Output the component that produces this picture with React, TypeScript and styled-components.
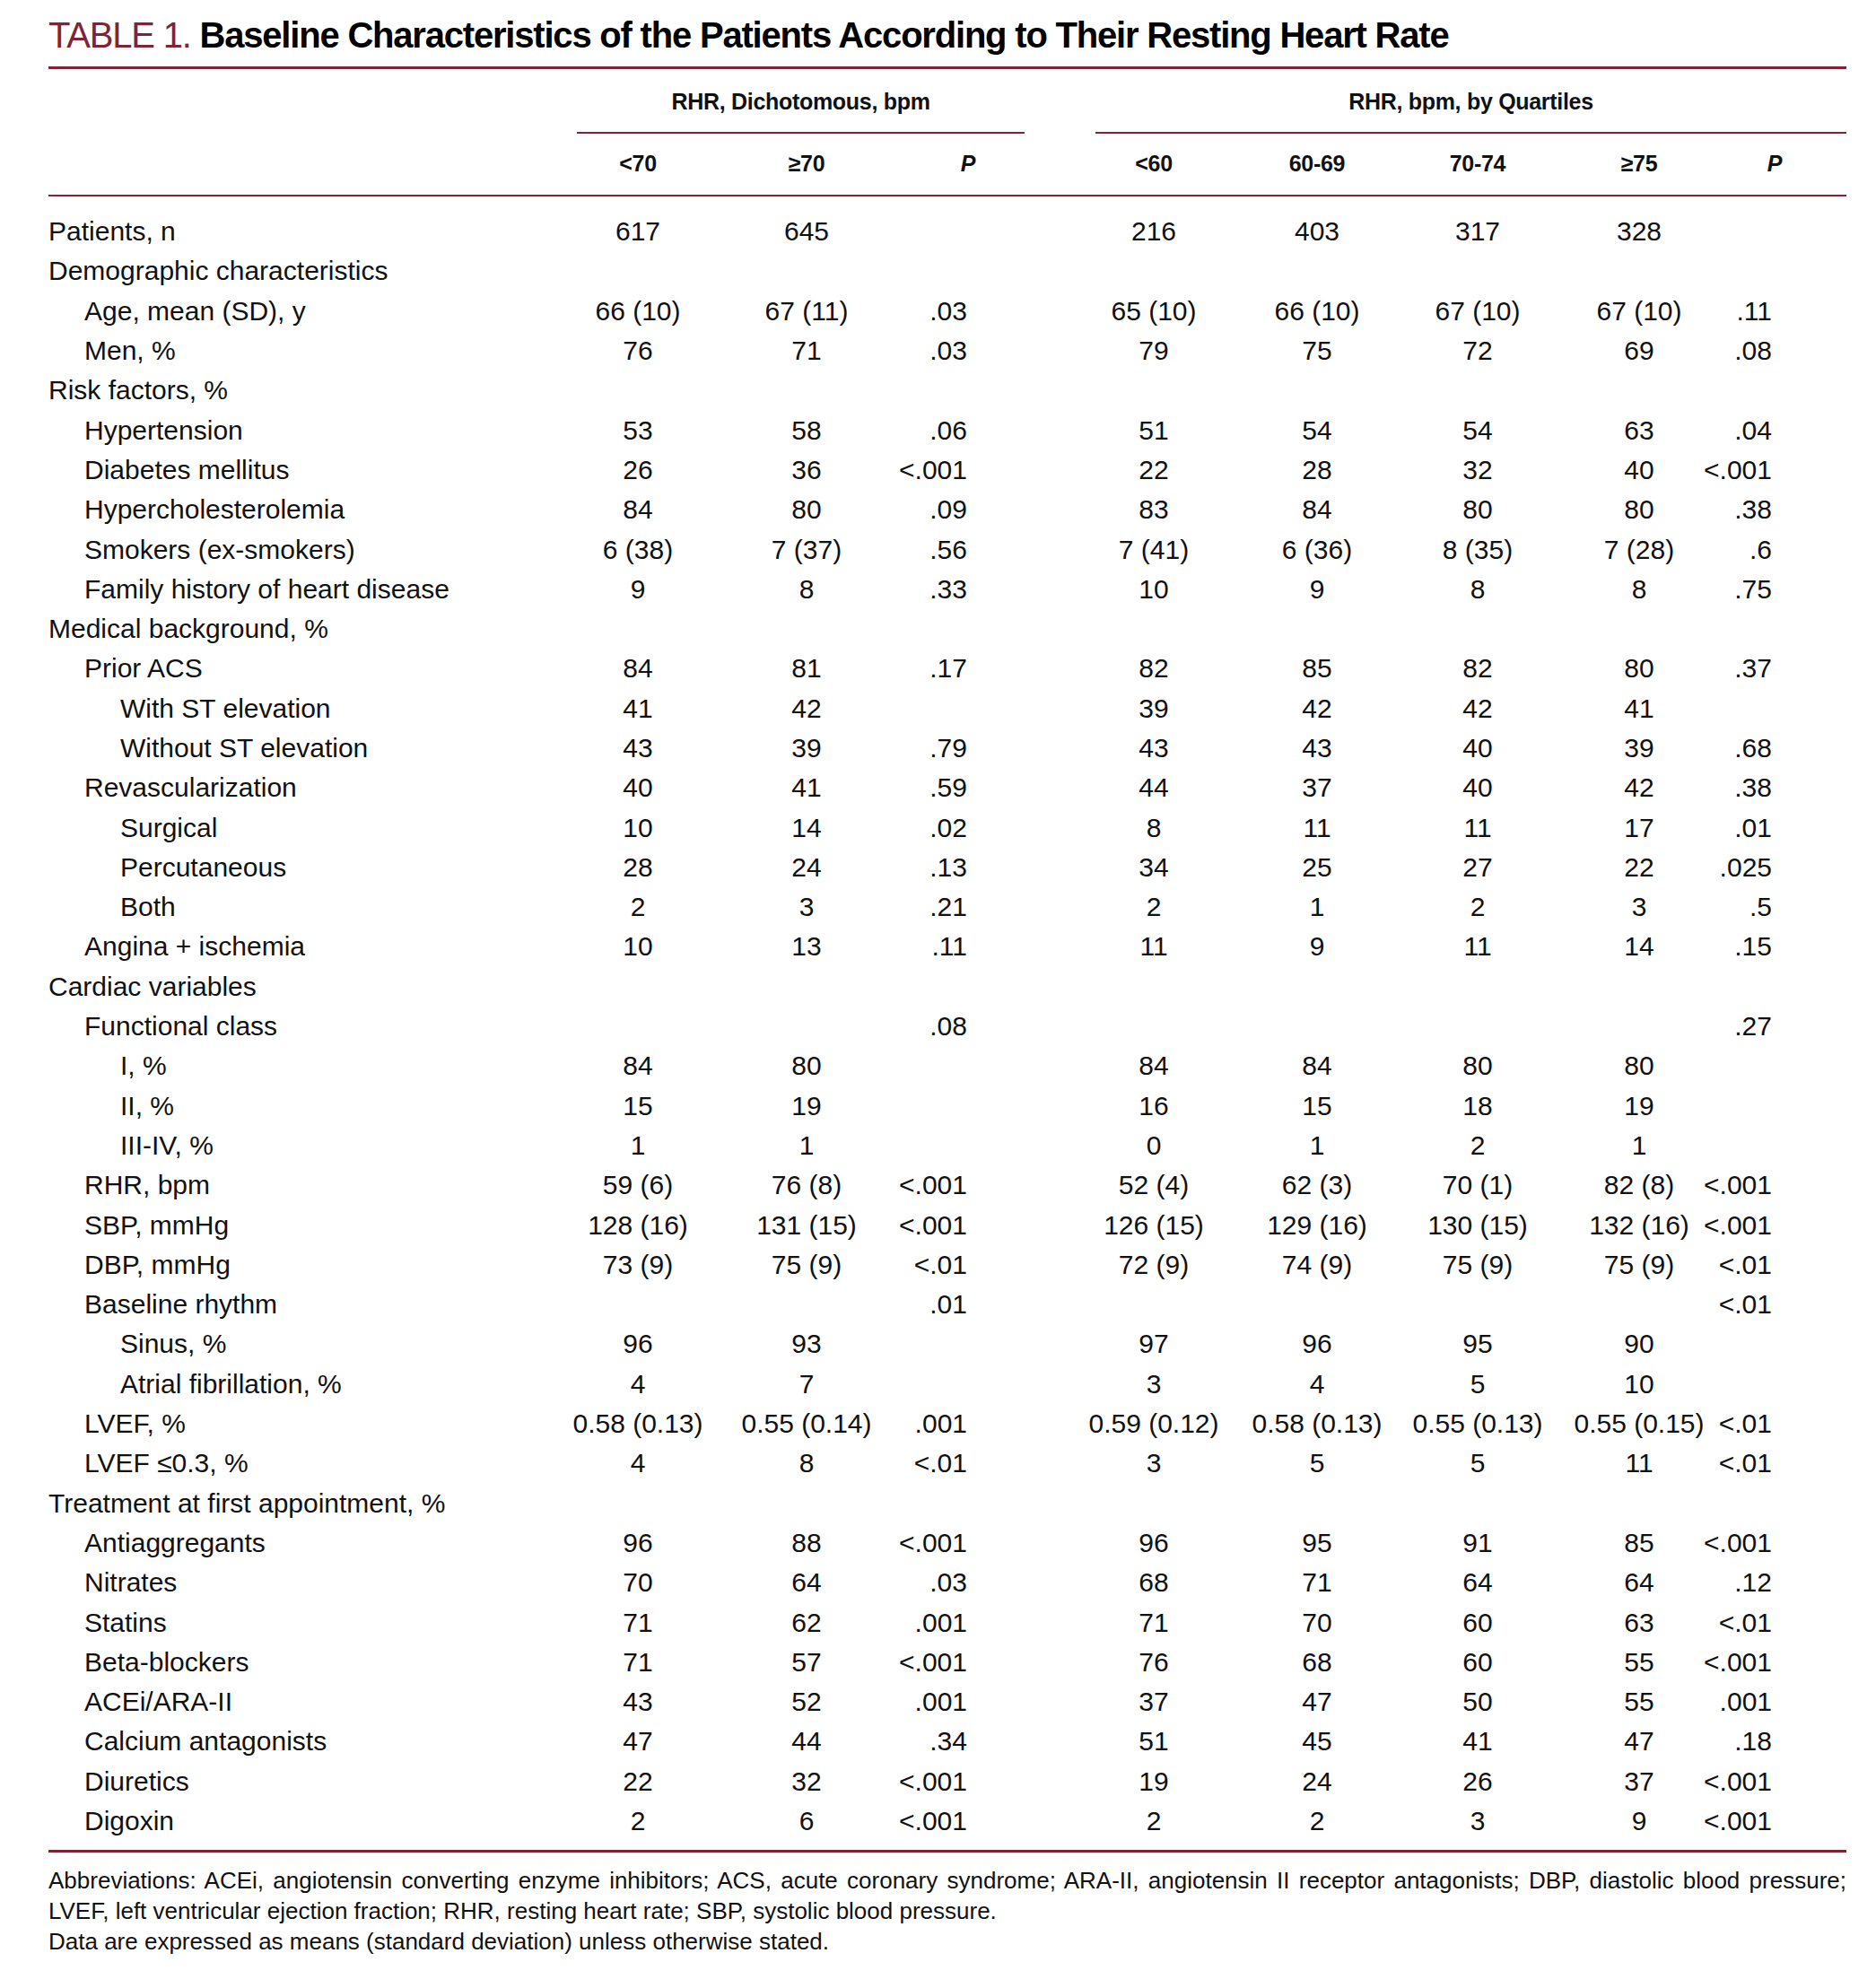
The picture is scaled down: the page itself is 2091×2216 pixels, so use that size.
import React from "react";
import styled, { createGlobalStyle } from "styled-components";

const GlobalStyle = createGlobalStyle`
  html, body {
    margin: 0;
    padding: 0;
    background: #ffffff;
  }
  body {
    font-family: "Liberation Sans", Arial, sans-serif;
    color: #111111;
  }
`;

const MAROON = "#7d2536";
const COLS = "563px 188px 188px 173px 240px 124px 234px 126px 168px";

const Page = styled.div`
  width: 2004px;
  margin-left: 54px;
  padding-top: 14px;
  padding-bottom: 40px;
`;

const Title = styled.h1`
  margin: 0;
  font-family: "Liberation Sans Narrow", "Liberation Sans", Arial, sans-serif;
  font-size: 40px;
  line-height: 50px;
  font-weight: 700;
  letter-spacing: -1.2px;
  color: #000;
  white-space: nowrap;
`;

const TitleTag = styled.span`
  font-weight: 400;
  color: ${MAROON};
`;

const Rule = styled.div`
  height: 2.5px;
  background: ${MAROON};
`;

const TopRule = styled(Rule)`
  margin-top: 10px;
`;

const HeadGrid = styled.div`
  display: grid;
  grid-template-columns: ${COLS};
`;

const GroupLabel = styled.div<{ $start: number; $end: number; $ml: number; $mr: number }>`
  grid-column: ${(p) => p.$start} / ${(p) => p.$end};
  margin: 0 ${(p) => p.$mr}px 0 ${(p) => p.$ml}px;
  padding-top: 21px;
  padding-bottom: 19px;
  border-bottom: 2.5px solid ${MAROON};
  text-align: center;
  font-size: 25px;
  line-height: 30px;
  font-weight: 700;
  letter-spacing: -0.3px;
  white-space: nowrap;
`;

const ColHead = styled.div<{ $align: "center" | "flex-end"; $pr?: number }>`
  display: flex;
  align-items: center;
  justify-content: ${(p) => p.$align};
  padding-right: ${(p) => p.$pr ?? 0}px;
  height: 68px;
  font-size: 25px;
  font-weight: 700;
  letter-spacing: -0.3px;
  white-space: nowrap;
`;

const Italic = styled.span`
  font-style: italic;
`;

const Body = styled.div`
  padding: 17px 0 10px;
`;

const Row = styled.div`
  display: grid;
  grid-template-columns: ${COLS};
  height: 44.3px;
  align-items: center;
  font-size: 30px;
  line-height: 36px;
`;

const Label = styled.div<{ $level: number }>`
  padding-left: ${(p) => p.$level * 40}px;
  white-space: nowrap;
`;

const Cell = styled.div<{ $align: "center" | "flex-end"; $pr?: number }>`
  display: flex;
  justify-content: ${(p) => p.$align};
  padding-right: ${(p) => p.$pr ?? 0}px;
  white-space: nowrap;
`;

const Notes = styled.div`
  margin-top: 14px;
  font-size: 26px;
  line-height: 34px;
`;

const NoteLine = styled.div<{ $justify?: boolean }>`
  text-align: ${(p) => (p.$justify ? "justify" : "left")};
  text-align-last: ${(p) => (p.$justify ? "justify" : "left")};
  white-space: ${(p) => (p.$justify ? "normal" : "nowrap")};
`;

type RowData = [number, string, ...string[]];

const rows: RowData[] = [
  [0, "Patients, n", "617", "645", "", "216", "403", "317", "328", ""],
  [0, "Demographic characteristics"],
  [1, "Age, mean (SD), y", "66 (10)", "67 (11)", ".03", "65 (10)", "66 (10)", "67 (10)", "67 (10)", ".11"],
  [1, "Men, %", "76", "71", ".03", "79", "75", "72", "69", ".08"],
  [0, "Risk factors, %"],
  [1, "Hypertension", "53", "58", ".06", "51", "54", "54", "63", ".04"],
  [1, "Diabetes mellitus", "26", "36", "<.001", "22", "28", "32", "40", "<.001"],
  [1, "Hypercholesterolemia", "84", "80", ".09", "83", "84", "80", "80", ".38"],
  [1, "Smokers (ex-smokers)", "6 (38)", "7 (37)", ".56", "7 (41)", "6 (36)", "8 (35)", "7 (28)", ".6"],
  [1, "Family history of heart disease", "9", "8", ".33", "10", "9", "8", "8", ".75"],
  [0, "Medical background, %"],
  [1, "Prior ACS", "84", "81", ".17", "82", "85", "82", "80", ".37"],
  [2, "With ST elevation", "41", "42", "", "39", "42", "42", "41", ""],
  [2, "Without ST elevation", "43", "39", ".79", "43", "43", "40", "39", ".68"],
  [1, "Revascularization", "40", "41", ".59", "44", "37", "40", "42", ".38"],
  [2, "Surgical", "10", "14", ".02", "8", "11", "11", "17", ".01"],
  [2, "Percutaneous", "28", "24", ".13", "34", "25", "27", "22", ".025"],
  [2, "Both", "2", "3", ".21", "2", "1", "2", "3", ".5"],
  [1, "Angina + ischemia", "10", "13", ".11", "11", "9", "11", "14", ".15"],
  [0, "Cardiac variables"],
  [1, "Functional class", "", "", ".08", "", "", "", "", ".27"],
  [2, "I, %", "84", "80", "", "84", "84", "80", "80", ""],
  [2, "II, %", "15", "19", "", "16", "15", "18", "19", ""],
  [2, "III-IV, %", "1", "1", "", "0", "1", "2", "1", ""],
  [1, "RHR, bpm", "59 (6)", "76 (8)", "<.001", "52 (4)", "62 (3)", "70 (1)", "82 (8)", "<.001"],
  [1, "SBP, mmHg", "128 (16)", "131 (15)", "<.001", "126 (15)", "129 (16)", "130 (15)", "132 (16)", "<.001"],
  [1, "DBP, mmHg", "73 (9)", "75 (9)", "<.01", "72 (9)", "74 (9)", "75 (9)", "75 (9)", "<.01"],
  [1, "Baseline rhythm", "", "", ".01", "", "", "", "", "<.01"],
  [2, "Sinus, %", "96", "93", "", "97", "96", "95", "90", ""],
  [2, "Atrial fibrillation, %", "4", "7", "", "3", "4", "5", "10", ""],
  [1, "LVEF, %", "0.58 (0.13)", "0.55 (0.14)", ".001", "0.59 (0.12)", "0.58 (0.13)", "0.55 (0.13)", "0.55 (0.15)", "<.01"],
  [1, "LVEF \u22640.3, %", "4", "8", "<.01", "3", "5", "5", "11", "<.01"],
  [0, "Treatment at first appointment, %"],
  [1, "Antiaggregants", "96", "88", "<.001", "96", "95", "91", "85", "<.001"],
  [1, "Nitrates", "70", "64", ".03", "68", "71", "64", "64", ".12"],
  [1, "Statins", "71", "62", ".001", "71", "70", "60", "63", "<.01"],
  [1, "Beta-blockers", "71", "57", "<.001", "76", "68", "60", "55", "<.001"],
  [1, "ACEi/ARA-II", "43", "52", ".001", "37", "47", "50", "55", ".001"],
  [1, "Calcium antagonists", "47", "44", ".34", "51", "45", "41", "47", ".18"],
  [1, "Diuretics", "22", "32", "<.001", "19", "24", "26", "37", "<.001"],
  [1, "Digoxin", "2", "6", "<.001", "2", "2", "3", "9", "<.001"],
];

// index -> [alignment, padding-right] for value columns
const colSpec: Array<["center" | "flex-end", number]> = [
  ["center", 0],
  ["center", 0],
  ["flex-end", 88],
  ["center", 0],
  ["center", 0],
  ["center", 0],
  ["center", 0],
  ["flex-end", 83],
];

// header padding differs slightly for the italic P columns
const headSpec: Array<["center" | "flex-end", number]> = [
  ["center", 0],
  ["center", 0],
  ["flex-end", 79],
  ["center", 0],
  ["center", 0],
  ["center", 0],
  ["center", 0],
  ["flex-end", 72],
];

const headers: React.ReactNode[] = [
  "<70",
  "\u226570",
  <Italic key="p1">P</Italic>,
  "<60",
  "60-69",
  "70-74",
  "\u226575",
  <Italic key="p2">P</Italic>,
];

export default function App() {
  return (
    <>
      <GlobalStyle />
      <Page>
        <Title>
          <TitleTag>TABLE 1.</TitleTag> Baseline Characteristics of the Patients According to Their Resting Heart Rate
        </Title>
        <TopRule />
        <HeadGrid>
          <div />
          <GroupLabel $start={2} $end={5} $ml={26} $mr={24}>
            RHR, Dichotomous, bpm
          </GroupLabel>
          <GroupLabel $start={5} $end={10} $ml={55} $mr={0}>
            RHR, bpm, by Quartiles
          </GroupLabel>
          <div />
          {headers.map((h, i) => (
            <ColHead key={i} $align={headSpec[i][0]} $pr={headSpec[i][1]}>
              {h}
            </ColHead>
          ))}
        </HeadGrid>
        <Rule />
        <Body>
          {rows.map(([level, label, ...vals], r) => (
            <Row key={r}>
              <Label $level={level}>{label}</Label>
              {colSpec.map(([align, pr], i) => (
                <Cell key={i} $align={align} $pr={pr}>
                  {vals[i] ?? ""}
                </Cell>
              ))}
            </Row>
          ))}
        </Body>
        <Rule />
        <Notes>
          <NoteLine $justify>
            Abbreviations: ACEi, angiotensin converting enzyme inhibitors; ACS, acute coronary syndrome; ARA-II, angiotensin II receptor antagonists; DBP, diastolic blood pressure;
          </NoteLine>
          <NoteLine>
            LVEF, left ventricular ejection fraction; RHR, resting heart rate; SBP, systolic blood pressure.
          </NoteLine>
          <NoteLine>Data are expressed as means (standard deviation) unless otherwise stated.</NoteLine>
        </Notes>
      </Page>
    </>
  );
}
